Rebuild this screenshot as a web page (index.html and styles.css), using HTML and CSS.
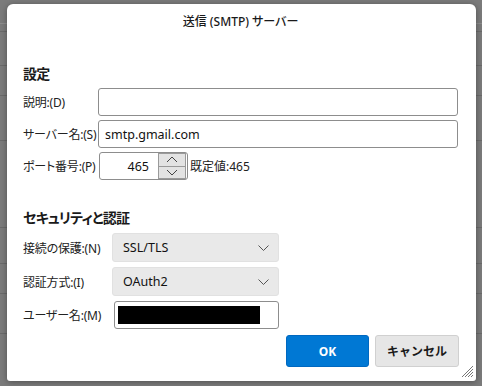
FILE: index.html
```html
<!DOCTYPE html>
<html lang="ja">
<head>
    <meta charset="UTF-8">
    <title>送信 (SMTP) サーバー</title>
    <link rel="stylesheet" href="styles.css">
</head>
<body>
    <div class="dialog">
        <div class="title">送信 (SMTP) サーバー</div>

        <div class="heading">設定</div>
        <div class="grid grid-settings">
            <label class="label">説明:(D)</label>
            <input class="text-input" type="text" value="">

            <label class="label">サーバー名:(S)</label>
            <input class="text-input" type="text" value="smtp.gmail.com">

            <label class="label">ポート番号:(P)</label>
            <div class="port-row">
                <div class="port-box">
                    <span class="port-value">465</span>
                    <div class="spinner">
                        <div class="spin-btn">
                            <svg width="12" height="7" viewBox="0 0 12 7"><path d="M1 6 L6 1 L11 6" fill="none" stroke="#444" stroke-width="1"/></svg>
                        </div>
                        <div class="spin-btn">
                            <svg width="12" height="7" viewBox="0 0 12 7"><path d="M1 1 L6 6 L11 1" fill="none" stroke="#444" stroke-width="1"/></svg>
                        </div>
                    </div>
                </div>
                <span class="default-text">既定値:465</span>
            </div>
        </div>

        <div class="heading heading-security">セキュリティと認証</div>
        <div class="grid grid-security">
            <label class="label">接続の保護:(N)</label>
            <div class="select">
                <span>SSL/TLS</span>
                <svg width="11" height="6" viewBox="0 0 11 6"><path d="M0.5 0.5 L5.5 5.5 L10.5 0.5" fill="none" stroke="#555" stroke-width="1"/></svg>
            </div>

            <label class="label">認証方式:(I)</label>
            <div class="select">
                <span>OAuth2</span>
                <svg width="11" height="6" viewBox="0 0 11 6"><path d="M0.5 0.5 L5.5 5.5 L10.5 0.5" fill="none" stroke="#555" stroke-width="1"/></svg>
            </div>

            <label class="label">ユーザー名:(M)</label>
            <div class="user-box">
                <div class="redacted"></div>
            </div>
        </div>

        <div class="buttons">
            <button class="btn btn-ok">OK</button>
            <button class="btn btn-cancel">キャンセル</button>
        </div>

        <svg class="grip" width="13" height="13" viewBox="0 0 13 13">
            <path d="M12 1 L1 12 M12 4 L4 12 M12 7 L7 12 M12 10 L10 12" stroke="#777" stroke-width="1"/>
        </svg>
    </div>
</body>
</html>
```

FILE: styles.css
```css
* {
    box-sizing: border-box;
}
body {
    margin: 0;
    padding: 4px 0 0 7px;
    width: 482px;
    height: 386px;
    overflow: hidden;
    font-family: "Noto Sans", "Noto Sans CJK JP", sans-serif;
    font-feature-settings: "palt";
    font-size: 12px;
    color: #1e1e1e;
    background-color: #7b7b7b;
    background-image:
        linear-gradient(to bottom, transparent 23px, #8c8c8c 23px, #8c8c8c 24px, transparent 24px),
        linear-gradient(to bottom, transparent 31px, #6a6a6a 31px, #6a6a6a 32px, transparent 32px),
        linear-gradient(to bottom, transparent 65px, #6a6a6a 65px, #6a6a6a 66px, transparent 66px),
        linear-gradient(to bottom, transparent 95px, #6a6a6a 95px, #6a6a6a 96px, transparent 96px),
        linear-gradient(to bottom, transparent 140px, #6a6a6a 140px, #6a6a6a 141px, transparent 141px),
        linear-gradient(to bottom, transparent 227px, #6a6a6a 227px, #6a6a6a 228px, transparent 228px),
        linear-gradient(to bottom, transparent 263px, #6a6a6a 263px, #6a6a6a 264px, transparent 264px),
        linear-gradient(to bottom, transparent 293px, #6a6a6a 293px, #6a6a6a 294px, transparent 294px),
        linear-gradient(to bottom, transparent 333px, #6a6a6a 333px, #6a6a6a 334px, transparent 334px);
}
.dialog {
    position: relative;
    width: 469px;
    height: 377px;
    padding: 0 18px 0 16px;
    background: #fff;
    border-radius: 6px 6px 3px 3px;
    box-shadow: 0 1px 6px rgba(0, 0, 0, 0.35);
}
.title {
    height: 36px;
    line-height: 36px;
    text-align: center;
    font-size: 12px;
    font-weight: 500;
    color: #1a1a1a;
}
.heading {
    margin-top: 24px;
    height: 20px;
    line-height: 20px;
    font-size: 14px;
    font-weight: bold;
    letter-spacing: -0.8px;
    color: #1a1a1a;
}
.heading-security {
    margin-top: 28px;
}
.grid {
    display: grid;
    align-items: center;
}
.grid-settings {
    margin-top: 4px;
    grid-template-columns: 75px 1fr;
    grid-auto-rows: 28px;
    row-gap: 4px;
}
.grid-security {
    margin-top: 5px;
    grid-template-columns: 89px 167px;
    grid-template-rows: 29px 29px 28px;
    row-gap: 5px;
}
.label {
    white-space: nowrap;
    letter-spacing: -0.2px;
    color: #222;
}
.text-input {
    width: 100%;
    height: 28px;
    margin: 0;
    padding: 0 6px;
    border: 1px solid #8d8d8d;
    border-radius: 3px;
    font-family: inherit;
    font-size: 12.5px;
    color: #111;
    outline: none;
}
.port-row {
    display: flex;
    align-items: center;
    gap: 2px;
    margin-left: 1px;
}
.port-box {
    display: flex;
    align-items: center;
    width: 89px;
    height: 28px;
    padding: 0 1px 0 0;
    border: 1px solid #8d8d8d;
    border-radius: 3px;
}
.port-value {
    flex: 1;
    text-align: right;
    padding-right: 9px;
    font-size: 12.5px;
    color: #111;
}
.spinner {
    display: flex;
    flex-direction: column;
    width: 28px;
    height: 26px;
    border: 1px solid #9a9a9a;
    background: #e3e3e3;
}
.spin-btn {
    flex: 1;
    display: flex;
    align-items: center;
    justify-content: center;
}
.spin-btn + .spin-btn {
    border-top: 1px solid #9a9a9a;
}
.default-text {
    color: #222;
}
.select {
    display: flex;
    align-items: center;
    justify-content: space-between;
    height: 29px;
    padding: 0 9px 0 10px;
    background: #e9e9e9;
    border: 1px solid #e1e1e1;
    border-radius: 3px;
    font-size: 12.5px;
    color: #111;
}
.user-box {
    display: flex;
    align-items: center;
    height: 28px;
    margin-left: 2px;
    padding: 0 0 0 3px;
    border: 1px solid #8d8d8d;
    border-radius: 3px;
}
.redacted {
    width: 142px;
    height: 18px;
    background: #000;
}
.buttons {
    display: flex;
    justify-content: flex-end;
    gap: 6px;
    margin-top: 6px;
    margin-right: -1px;
}
.btn {
    height: 32px;
    border-radius: 3px;
    font-family: inherit;
    font-size: 12px;
    font-weight: bold;
    cursor: pointer;
}
.btn-ok {
    width: 83px;
    background-color: #0078d4;
    border: 1px solid #0068c0;
    color: #fff;
}
.btn-cancel {
    width: 84px;
    background-color: #e6e6e6;
    border: 1px solid #d0d0d0;
    color: #1a1a1a;
}
.grip {
    position: absolute;
    right: 2px;
    bottom: 3px;
}
```
